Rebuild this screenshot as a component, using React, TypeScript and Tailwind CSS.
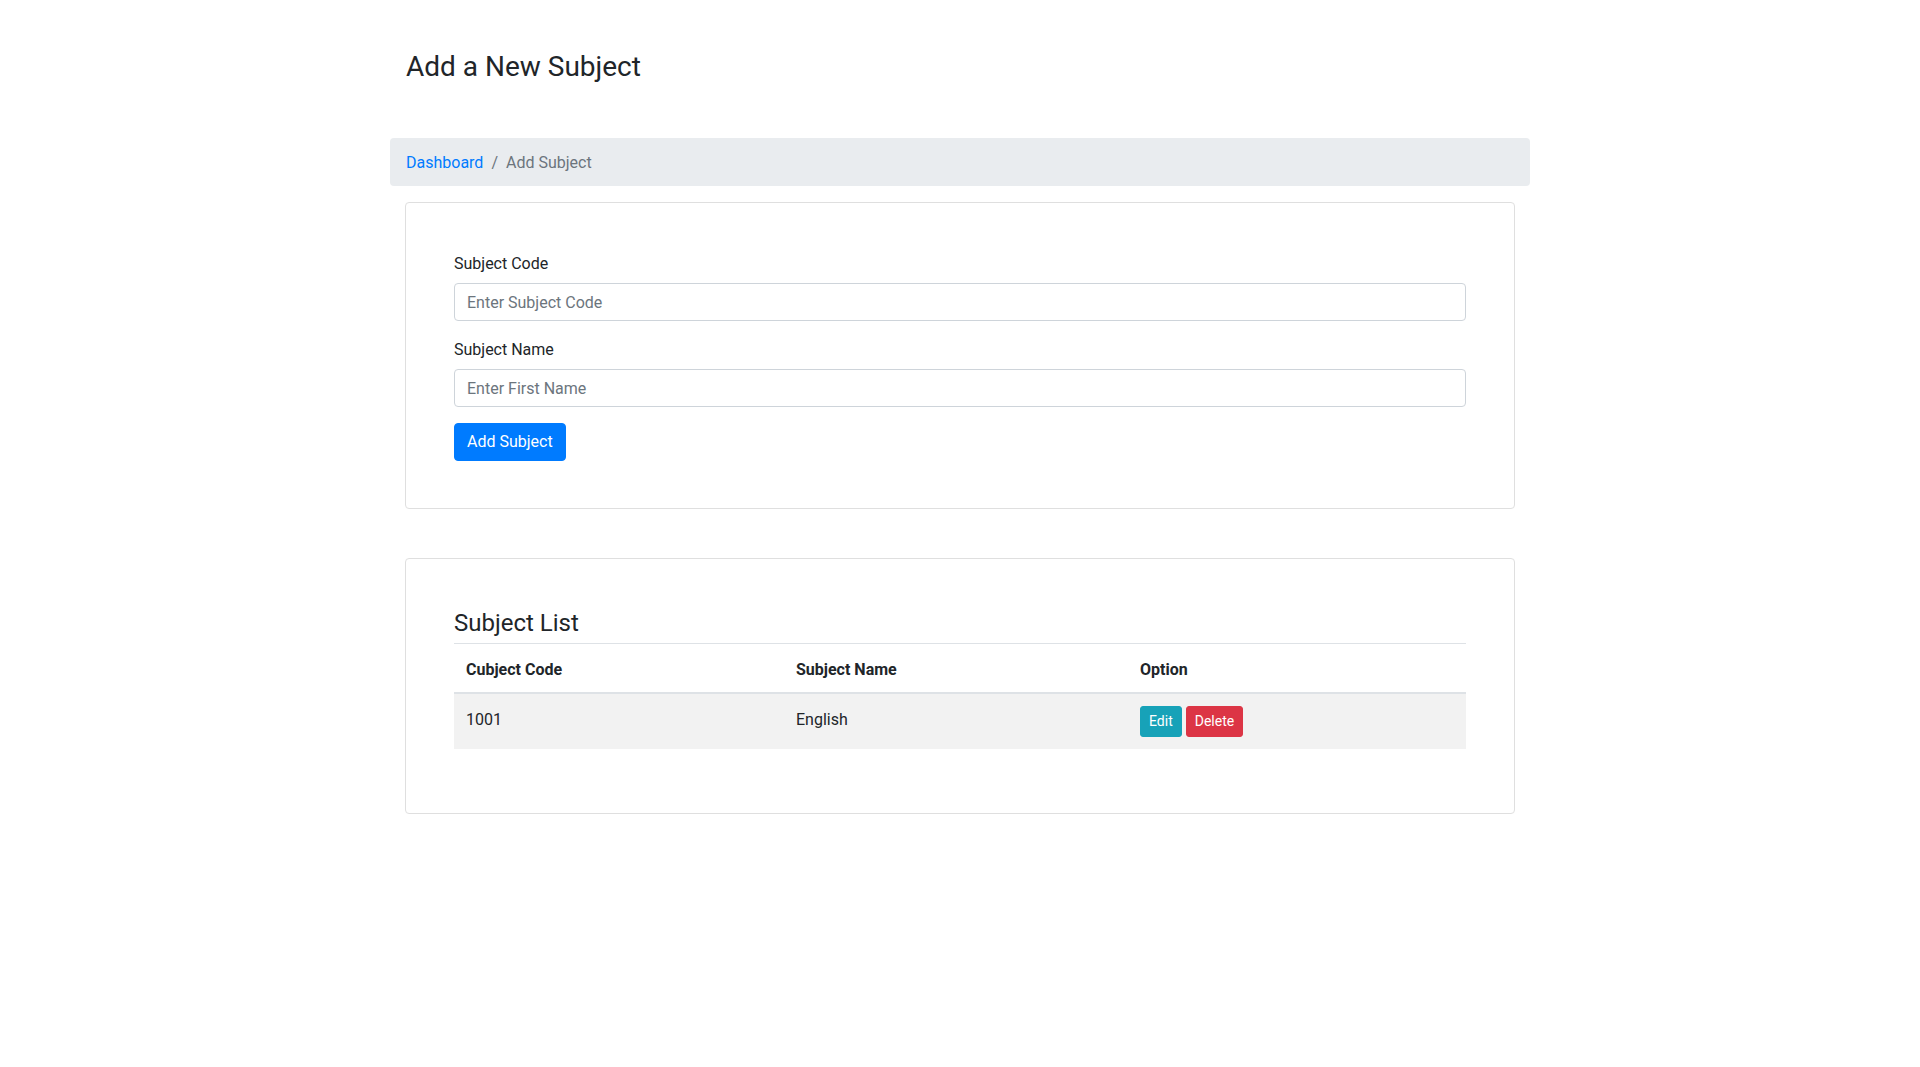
type Subject = {
  code: string;
  name: string;
};

const subjects: Subject[] = [{ code: "1001", name: "English" }];

function FormField({ label, placeholder }: { label: string; placeholder: string }) {
  return (
    <div className="mb-[16px]">
      <label className="mb-[7px] block pt-[1px] text-[16px] leading-[24px] text-[#212529]">
        {label}
      </label>
      <input
        type="text"
        placeholder={placeholder}
        className="block h-[38px] w-full rounded-[4px] border border-[#ced4da] bg-white px-[12px] text-[16px] leading-[24px] text-[#495057] outline-none placeholder:text-[#6c757d]"
      />
    </div>
  );
}

export default function App() {
  return (
    <div className="min-h-screen bg-white font-['Roboto',sans-serif] text-[#212529]">
      <div className="mx-auto w-[1140px] pt-[50px]">
        <h3 className="pl-[16px] text-[28px] font-normal leading-[34px] text-[#212529]">
          Add a New Subject
        </h3>

        <nav className="mt-[54px] mb-[16px] flex items-center rounded-[4px] bg-[#e9ecef] px-[16px] pt-[13px] pb-[11px] text-[16px] leading-[24px]">
          <a href="#" className="text-[#007bff]">
            Dashboard
          </a>
          <span className="px-[8px] text-[#6c757d]">/</span>
          <span className="text-[#6c757d]">Add Subject</span>
        </nav>

        <div className="px-[15px]">
          <div className="rounded-[4px] border border-[#dfdfdf] px-[48px] pt-[48px] pb-[47px]">
            <form>
              <FormField label="Subject Code" placeholder="Enter Subject Code" />
              <FormField label="Subject Name" placeholder="Enter First Name" />
              <button
                type="button"
                className="h-[38px] rounded-[4px] border border-[#007bff] bg-[#007bff] px-[12px] text-[16px] leading-[24px] text-white"
              >
                Add Subject
              </button>
            </form>
          </div>

          <div className="mt-[49px] rounded-[4px] border border-[#dfdfdf] px-[48px] pt-[48px] pb-[48px]">
            <h4 className="mb-[6px] pt-[2px] text-[24px] font-normal leading-[28px] text-[#212529]">
              Subject List
            </h4>
            <table className="mb-[16px] w-full border-collapse text-left text-[16px] leading-[24px]">
              <thead>
                <tr>
                  <th className="w-[330px] border-t border-b-2 border-[#dee2e6] px-[12px] pt-[14px] pb-[10px] align-bottom font-bold">
                    Cubject Code
                  </th>
                  <th className="w-[344px] border-t border-b-2 border-[#dee2e6] px-[12px] pt-[14px] pb-[10px] align-bottom font-bold">
                    Subject Name
                  </th>
                  <th className="border-t border-b-2 border-[#dee2e6] px-[12px] pt-[14px] pb-[10px] align-bottom font-bold">
                    Option
                  </th>
                </tr>
              </thead>
              <tbody>
                {subjects.map((s) => (
                  <tr key={s.code} className="bg-[#f2f2f2]">
                    <td className="px-[12px] pt-[14px] pb-[10px] align-top">{s.code}</td>
                    <td className="px-[12px] pt-[14px] pb-[10px] align-top">{s.name}</td>
                    <td className="px-[12px] py-[12px] align-top">
                      <div className="flex gap-[4px]">
                        <button
                          type="button"
                          className="h-[31px] rounded-[3px] border border-[#17a2b8] bg-[#17a2b8] px-[8px] text-[14px] leading-[21px] text-white"
                        >
                          Edit
                        </button>
                        <button
                          type="button"
                          className="h-[31px] rounded-[3px] border border-[#dc3545] bg-[#dc3545] px-[8px] text-[14px] leading-[21px] text-white"
                        >
                          Delete
                        </button>
                      </div>
                    </td>
                  </tr>
                ))}
              </tbody>
            </table>
          </div>
        </div>
      </div>
    </div>
  );
}
